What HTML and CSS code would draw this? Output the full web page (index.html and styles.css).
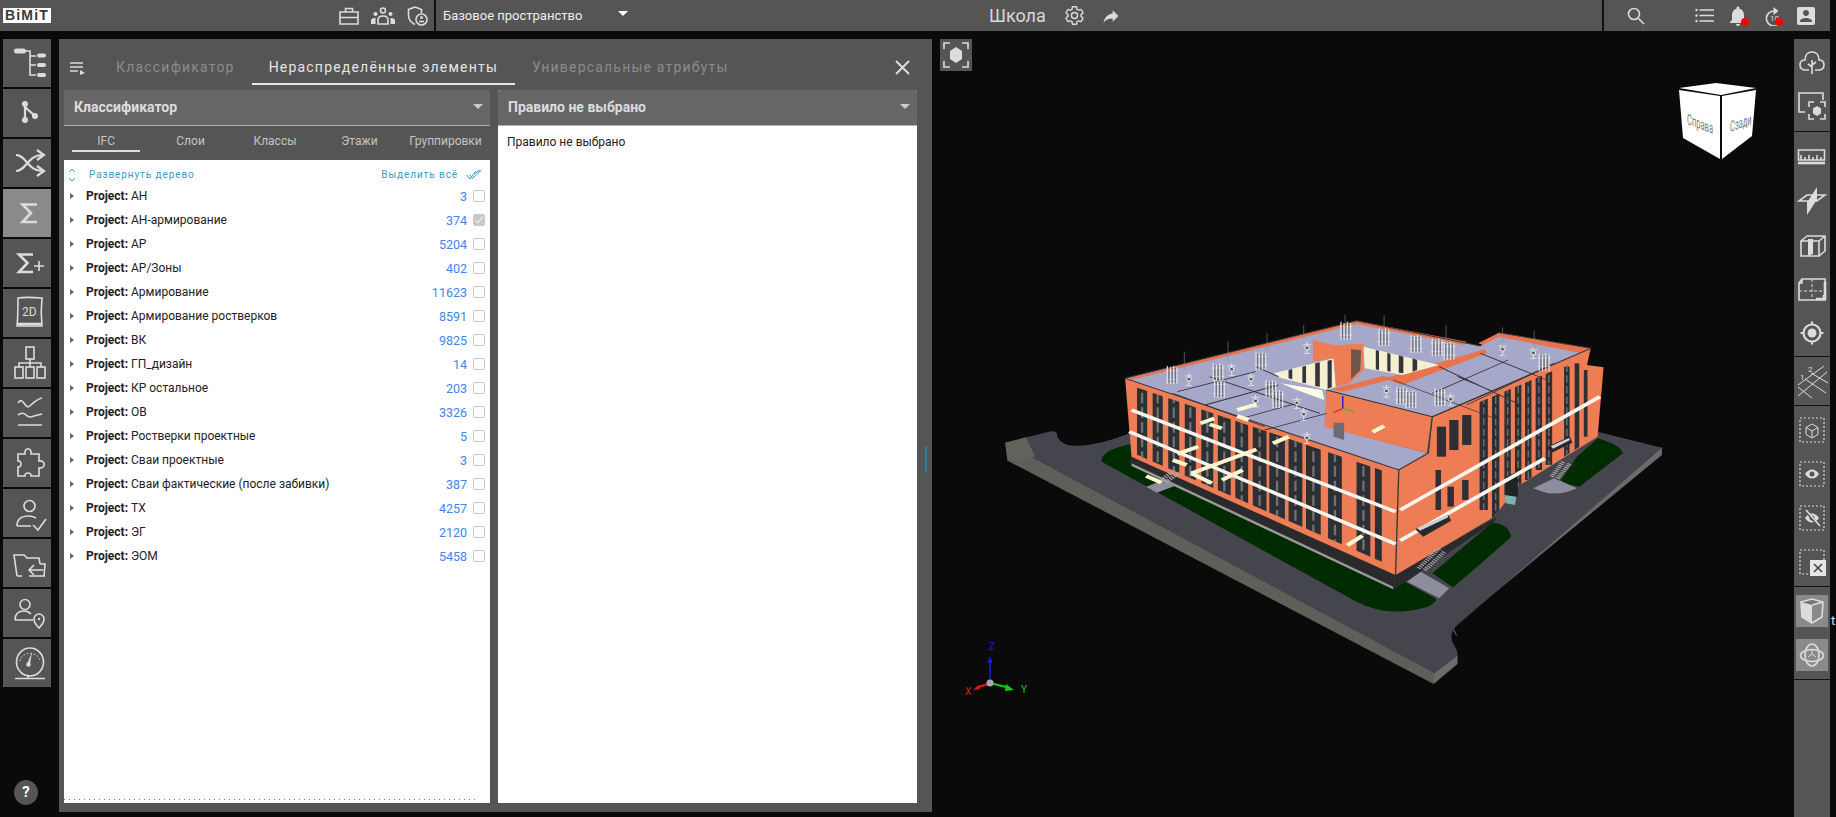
FILE: index.html
```html
<!DOCTYPE html>
<html lang="ru">
<head>
<meta charset="UTF-8">
<title>Школа</title>
<link rel="stylesheet" href="styles.css">
</head>
<body>
<header class="topbar">
  <div class="top-left">
    <div class="logo">BiMiT</div>
    <div class="top-tools">
      <svg class="ico" width="20" height="18" viewBox="0 0 20 18"><path d="M1 5h18v12H1zM6.500 5V1.500h7V5M1 10.500h18M8 10.500h4"/></svg>
      <svg class="ico" width="24" height="18" viewBox="0 0 24 18"><circle cx="12" cy="3.500" r="2.500"/><path d="M7 17v-4c0-3 2-4 5-4s5 1 5 4v4z"/><circle class="solid" cx="4.500" cy="7" r="2"/><circle class="solid" cx="19.500" cy="7" r="2"/><path class="solid" d="M0 17v-3c0-2 1-3 4.500-3v6zM24 17v-3c0-2-1-3-4.500-3v6z"/></svg>
      <svg class="ico" width="21" height="20" viewBox="0 0 21 20"><path d="M8 1 1.500 3.500v6c0 4 2.500 7 6.500 9M8 1l6.500 2.500V7"/><circle cx="14.500" cy="13.500" r="5.500"/><circle class="solid" cx="14.500" cy="11.500" r="1.500"/><path d="M12 15.500h5"/></svg>
    </div>
  </div>
  <div class="workspace">
    <span>Базовое пространство</span>
    <i class="caret caret-light"></i>
  </div>
  <div class="title">
    <span>Школа</span>
    <svg class="ico" width="21" height="21" viewBox="0 0 24 24"><path d="M19.430 12.980c.040-.320.070-.640.070-.980 0-.340-.030-.660-.070-.980l2.110-1.650c.190-.150.240-.420.120-.640l-2-3.460c-.120-.220-.390-.300-.610-.220l-2.490 1c-.520-.400-1.080-.730-1.690-.980l-.380-2.650C14.460 2.180 14.250 2 14 2h-4c-.250 0-.460.180-.490.420l-.380 2.650c-.610.250-1.170.590-1.690.980l-2.490-1c-.230-.090-.490 0-.610.220l-2 3.460c-.130.220-.070.490.120.640l2.110 1.650c-.040.320-.070.650-.070.980 0 .330.030.660.070.980l-2.110 1.650c-.190.150-.240.420-.120.640l2 3.460c.120.220.390.300.610.220l2.490-1c.520.400 1.080.730 1.690.980l.380 2.650c.030.240.240.420.490.420h4c.250 0 .460-.180.490-.420l.380-2.650c.610-.250 1.170-.590 1.690-.980l2.490 1c.230.090.490 0 .610-.220l2-3.460c.120-.220.070-.490-.120-.640l-2.110-1.650zM12 15.500c-1.930 0-3.500-1.570-3.500-3.500s1.570-3.500 3.500-3.500 3.500 1.570 3.500 3.500-1.570 3.500-3.500 3.500z"/></svg>
    <svg class="ico-fill share" width="20" height="20" viewBox="0 0 24 24"><path d="M14 9V5l7 7-7 7v-4.100c-5 0-8.500 1.600-11 5.100 1-5 4-10 11-11z"/></svg>
  </div>
  <div class="top-right">
    <svg class="ico search" width="18" height="18" viewBox="0 0 18 18"><circle cx="7" cy="7" r="5.500"/><path d="m11 11 6 6"/></svg>
    <svg class="ico list" width="19" height="15" viewBox="0 0 19 15"><path d="M4.500 2H19M4.500 7.500H19M4.500 13H19"/><circle class="solid" cx="1.500" cy="2" r="1.200"/><circle class="solid" cx="1.500" cy="7.500" r="1.200"/><circle class="solid" cx="1.500" cy="13" r="1.200"/></svg>
    <div class="notif bell">
      <svg class="ico-fill" width="20" height="22" viewBox="2 1 20 22"><path d="M12 22c1.100 0 2-.900 2-2h-4c0 1.100.900 2 2 2zm6-6v-5c0-3.070-1.630-5.640-4.500-6.320V4c0-.830-.670-1.500-1.500-1.500s-1.500.670-1.500 1.500v.680C7.640 5.360 6 7.920 6 11v5l-2 2v1h16v-1l-2-2z"/></svg>
      <b class="dot"></b>
    </div>
    <div class="notif history">
      <svg class="ico" width="18" height="20" viewBox="0 0 18 20"><path d="M10 5a7.500 7.500 0 1 0 7 10"/><path class="solid" d="M9.500 1v8l5-4z"/><text x="6" y="15" class="mini">10</text></svg>
      <b class="dot"></b>
    </div>
    <svg class="ico-fill account" width="20" height="20" viewBox="2 2 20 20"><path d="M3 5v14c0 1.100.900 2 2 2h14c1.100 0 2-.900 2-2V5c0-1.100-.900-2-2-2H5c-1.100 0-2 .900-2 2zm12 4c0 1.660-1.340 3-3 3s-3-1.340-3-3 1.340-3 3-3 3 1.340 3 3zm-9 8c0-2 4-3.100 6-3.100s6 1.100 6 3.100v1H6v-1z"/></svg>
  </div>
</header>

<main class="workarea">
  <nav class="rail">
    <a class="rail-btn"><svg class="ico" viewBox="0 0 48 48"><path d="M20 12h7v24h6M27 17h6M27 26h6"/><rect class="solid" x="11" y="9.500" width="12" height="5" rx="2.500"/><rect class="solid" x="34" y="14.500" width="9" height="4" rx="2"/><rect class="solid" x="34" y="24" width="9" height="4" rx="2"/><rect class="solid" x="34" y="34" width="9" height="4" rx="2"/></svg></a>
    <a class="rail-btn"><svg class="ico thick" viewBox="0 0 48 48"><path d="M22 15v16M22 18l10 9"/><circle class="solid" cx="22" cy="15" r="3"/><circle class="solid" cx="22" cy="31" r="3"/><circle class="solid" cx="32" cy="27" r="3"/></svg></a>
    <a class="rail-btn"><svg class="ico thick" viewBox="0 0 48 48"><path d="M13 16c10 0 12 16 26 16M13 32c10 0 12-16 26-16M34 11l7 5-7 5M34 27l7 5-7 5"/></svg></a>
    <a class="rail-btn active"><svg class="ico sigma" viewBox="0 0 48 48"><path d="M34 15.500H19.500L28 24l-8.500 9H34"/></svg></a>
    <a class="rail-btn"><svg class="ico sigma" viewBox="0 0 48 48"><path d="M30 15.500H16L24.500 24 16 33h14"/><path class="plus" d="M31 27h10M36 22v10"/></svg></a>
    <a class="rail-btn"><svg class="ico" viewBox="0 0 48 48"><path d="M15 9c6-1 12-1 24 0-1 9-1 19 0 28H14c1-9 1-19 1-28z"/><path class="thick-line" d="M15 35h23"/><text x="19" y="27" class="label-2d">2D</text></svg></a>
    <a class="rail-btn"><svg class="ico" viewBox="0 0 48 48"><rect x="23" y="8" width="8" height="12"/><rect x="12" y="28" width="8" height="11"/><rect x="23" y="28" width="8" height="11"/><rect x="34" y="28" width="8" height="11"/><path d="M27 20v8M16 28v-4h22v4"/></svg></a>
    <a class="rail-btn"><svg class="ico" viewBox="0 0 48 48"><path d="M15 14c2-3 3-3 5-1s3 5 5 5 6-7 14-9M15 26c4-3 6-2 8 0s4 3 8 1l8-2M15 36h24"/></svg></a>
    <a class="rail-btn"><svg class="ico" viewBox="0 0 48 48"><path d="M22 15c-1-7 7-7 6 0h8v7c7-1 7 8 0 7v8h-8c1-4-7-4-6 0h-7v-9c4 1 4-7 0-6v-7z"/></svg></a>
    <a class="rail-btn"><svg class="ico" viewBox="0 0 48 48"><circle cx="26.500" cy="17" r="5.500"/><path d="M14 37c0-7 5-10 12-10 3 0 5 1 7 2M14 37h14M30 36l5 5 8-11"/></svg></a>
    <a class="rail-btn"><svg class="ico" viewBox="0 0 48 48"><path d="M14 37 11 16h10l3 3h12l1 6M19 37h-5M42 37H26M37 25h5l-1 12"/><path d="M26 31h14M31 26l-5 5 5 5"/></svg></a>
    <a class="rail-btn"><svg class="ico" viewBox="0 0 48 48"><circle cx="22" cy="15.500" r="5"/><path d="M12 31c0-6 3-9 9-9 3 0 5 1 7 3M12 31h18"/><path d="M36 39c-3-3-5-6-5-9a5 5 0 0 1 10 0c0 3-2 6-5 9z"/><circle class="solid" cx="36" cy="30" r="1.200"/></svg></a>
    <a class="rail-btn"><svg class="ico" viewBox="0 0 48 48"><ellipse cx="27" cy="23" rx="13.500" ry="14"/><path class="thin" d="M17 22c1-10 19-10 20 0" stroke-dasharray="1.500 2"/><path class="solid" d="m29 13-2 12h-3z"/><circle class="solid" cx="25.500" cy="25.500" r="2.200"/><path d="M25 37v2M12 39.500h30"/></svg></a>
    <div class="help">?</div>
  </nav>

  <section class="panel">
    <div class="panel-head">
      <svg class="ico menu" width="15" height="14" viewBox="0 0 15 14"><path d="M0 2h13M0 6h13M0 10h8"/><path class="solid" d="m10 9 5 3-5 2z"/></svg>
      <div class="tabs">
        <div class="tab">Классификатор</div>
        <div class="tab current">Нераспределённые элементы</div>
        <div class="tab">Универсальные атрибуты</div>
      </div>
      <svg class="ico close" width="15" height="15" viewBox="0 0 15 15"><path d="m1 1 13 13M14 1 1 14"/></svg>
    </div>
    <div class="panel-body">
      <div class="card card-left">
        <div class="card-head"><span>Классификатор</span><i class="caret"></i></div>
        <div class="subtabs">
          <div class="subtab current">IFC</div>
          <div class="subtab">Слои</div>
          <div class="subtab">Классы</div>
          <div class="subtab">Этажи</div>
          <div class="subtab">Группировки</div>
        </div>
        <div class="tree">
          <div class="tree-tools">
            <svg class="teal-ico" width="8" height="14" viewBox="0 0 8 14"><path d="m1 4 3-3 3 3M1 10l3 3 3-3"/></svg>
            <span class="expand">Развернуть дерево</span>
            <span class="select-all">Выделить всё</span>
            <svg class="teal-ico" width="16" height="11" viewBox="0 0 16 11"><path d="m.5 6 3.500 4 6-8M4 6l2.500 3.500L15.500 1M8 5l6-4"/></svg>
          </div>
          <div class="row"><i class="arrow"></i><span class="name"><b>Project:</b> АН</span><span class="count">3</span><i class="check"></i></div>
          <div class="row"><i class="arrow"></i><span class="name"><b>Project:</b> АН-армирование</span><span class="count">374</span><i class="check checked"></i></div>
          <div class="row"><i class="arrow"></i><span class="name"><b>Project:</b> АР</span><span class="count">5204</span><i class="check"></i></div>
          <div class="row"><i class="arrow"></i><span class="name"><b>Project:</b> АР/Зоны</span><span class="count">402</span><i class="check"></i></div>
          <div class="row"><i class="arrow"></i><span class="name"><b>Project:</b> Армирование</span><span class="count">11623</span><i class="check"></i></div>
          <div class="row"><i class="arrow"></i><span class="name"><b>Project:</b> Армирование ростверков</span><span class="count">8591</span><i class="check"></i></div>
          <div class="row"><i class="arrow"></i><span class="name"><b>Project:</b> ВК</span><span class="count">9825</span><i class="check"></i></div>
          <div class="row"><i class="arrow"></i><span class="name"><b>Project:</b> ГП_дизайн</span><span class="count">14</span><i class="check"></i></div>
          <div class="row"><i class="arrow"></i><span class="name"><b>Project:</b> КР остальное</span><span class="count">203</span><i class="check"></i></div>
          <div class="row"><i class="arrow"></i><span class="name"><b>Project:</b> ОВ</span><span class="count">3326</span><i class="check"></i></div>
          <div class="row"><i class="arrow"></i><span class="name"><b>Project:</b> Ростверки проектные</span><span class="count">5</span><i class="check"></i></div>
          <div class="row"><i class="arrow"></i><span class="name"><b>Project:</b> Сваи проектные</span><span class="count">3</span><i class="check"></i></div>
          <div class="row"><i class="arrow"></i><span class="name"><b>Project:</b> Сваи фактические (после забивки)</span><span class="count">387</span><i class="check"></i></div>
          <div class="row"><i class="arrow"></i><span class="name"><b>Project:</b> ТХ</span><span class="count">4257</span><i class="check"></i></div>
          <div class="row"><i class="arrow"></i><span class="name"><b>Project:</b> ЭГ</span><span class="count">2120</span><i class="check"></i></div>
          <div class="row"><i class="arrow"></i><span class="name"><b>Project:</b> ЭОМ</span><span class="count">5458</span><i class="check"></i></div>
          <div class="tree-end"></div>
        </div>
      </div>
      <div class="card card-right">
        <div class="card-head"><span>Правило не выбрано</span><i class="caret"></i></div>
        <div class="rule-body">Правило не выбрано</div>
      </div>
    </div>
    <div class="resize-handle"></div>
  </section>

  <section class="viewport">
    <div class="fit-btn">
      <svg class="ico" width="26" height="26" viewBox="0 0 26 26"><path d="M1 7V1h6M19 1h6v6M25 19v6h-6M7 25H1v-6"/><path class="solid" d="m13 5 6 4v8l-6 4-6-4V9z"/></svg>
    </div>

    <!-- coordinates read off the 3x crop, so the viewBox is stretched -->
    <svg class="model" viewBox="0 0 1568 1290" preserveAspectRatio="none">
      <defs>
        <clipPath id="wall-l"><path d="M325 285 905 555 900 830 335 490z"/></clipPath>
        <clipPath id="wall-r"><path d="M918 550 978 500 985 395 1090 335 1330 195 1322 230 1355 240 1340 440 1170 590 1120 680 910 845z"/></clipPath>
        <g id="unit" class="unit">
          <path d="M3 0v54M10 4v50M17 0v54M24 4v50M0 14h27M0 40h27"/>
          <path class="unit-dark" d="M6.500 6v44M13.500 6v44M20.500 6v44"/>
        </g>
        <g id="pipe" class="unit">
          <path d="M0 0v36M-9 8h18M-7 36h14"/>
          <circle cx="0" cy="18" r="5" fill="#555"/>
        </g>
      </defs>

      <!-- site -->
      <path fill="#5f5f5a" d="M55 458 60 512 988 1182 992 1148z"/>
      <path fill="#6b6b6b" d="M988 1182 1040 1122 1040 1095 990 1148zM1040 1040C1025 1020 1030 1005 1040 1000L1485 495 1485 472 1030 1010z"/>
      <path fill="#45454d" d="M55 458 150 425Q170 420 168 440 180 470 215 467 265 465 325 430L1345 425 1485 473 1040 1005Q1020 1030 1030 1060 1040 1080 1040 1095L990 1150z"/>
      <path fill="#63635e" d="M55 458 100 442 120 500 60 512z"/>
      <path fill="#002a00" d="M330 462Q262 480 265 515L820 935Q890 985 975 950 1005 930 985 920L925 875 895 892 335 515z"/>
      <path fill="#002a00" d="M985 850 1115 698Q1150 700 1157 740 1100 810 1030 892z"/>
      <path fill="#002a00" d="M1345 445Q1395 465 1400 490L1305 590Q1280 585 1265 570L1300 500z"/>
      <path fill="#8d8d9e" d="M362 590 400 570 440 580 385 608zM930 875 960 845 1022 895 1000 925zM1205 595 1250 565 1300 595Q1260 620 1225 605z"/>

      <!-- lower plinth and facades -->
      <path fill="#2a2a2c" d="M330 498 905 855 900 900 325 520z"/>
      <path fill="#9a9a9a" d="M330 520 900 890 900 898 330 528z"/>
      <path fill="#2a2a2c" d="M905 855 1125 680 1120 695 900 900z"/>
      <path fill="#ee7d55" d="M316 265 912 540 905 855 330 500z"/>
      <g clip-path="url(#wall-l)" fill="#2d2f33">
        <rect x="342" width="22" height="1290"/><rect x="376" width="22" height="1290"/>
        <rect x="410" width="24" height="1290"/><rect x="446" width="24" height="1290"/>
        <rect x="482" width="26" height="1290"/><rect x="518" width="28" height="1290"/>
        <rect x="556" width="28" height="1290"/><rect x="594" width="30" height="1290"/>
        <rect x="630" width="34" height="1290"/><rect x="672" width="30" height="1290"/>
        <rect x="710" width="32" height="1290"/><rect x="758" width="30" height="1290"/>
        <rect x="820" width="30" height="1290"/><rect x="860" width="15" height="1290"/>
      </g>
      <g clip-path="url(#wall-l)" class="panes">
        <path d="M353 0V1290M387 0V1290M422 0V1290M458 0V1290M495 0V1290M532 0V1290M570 0V1290M609 0V1290M647 0V1290M687 0V1290M726 0V1290M773 0V1290M835 0V1290"/>
      </g>
      <path fill="#ee7d55" d="M912 540 978 490 985 382 1090 320 1330 175 1322 225 1358 232 1345 440 1170 590 1120 680 905 855z"/>
      <g clip-path="url(#wall-r)" fill="#2d2f33">
        <rect x="995" y="410" width="20" height="90"/><rect x="1022" y="390" width="20" height="90"/>
        <rect x="1050" y="375" width="20" height="90"/>
        <rect x="992" y="540" width="12" height="120"/><rect x="1018" y="590" width="14" height="60"/><rect x="1050" y="570" width="14" height="60"/>
        <rect x="1088" y="320" width="18" height="340"/>
        <rect x="1115" y="300" width="16" height="390"/><rect x="1142" y="280" width="14" height="340"/>
        <rect x="1165" y="265" width="14" height="330"/><rect x="1187" y="250" width="14" height="320"/>
        <rect x="1210" y="240" width="14" height="300"/><rect x="1232" y="225" width="14" height="300"/>
        <rect x="1272" y="230" width="12" height="280"/><rect x="1295" y="220" width="10" height="260"/>
        <rect x="1315" y="240" width="8" height="200"/>
      </g>
      <g clip-path="url(#wall-r)" class="panes panes-r">
        <path d="M1097 0V660M1123 0V690M1149 0V620M1172 0V595M1194 0V570M1217 0V540M1239 0V525M1278 0V510"/>
      </g>
      <path fill="#202226" d="M1145 560 1170 545 1172 620 1145 620z"/>
      <path fill="#7fb4ae" d="M1142 615 1168 620 1165 645 1145 640z"/>

      <!-- roofs -->
      <path fill="#a6a8c9" d="M316 265 820 92 1090 168 1130 128 1330 175 985 380 755 300 755 410 975 490 912 540z"/>
      <path fill="#e9734c" d="M325 265 820 92 1060 155 1055 165 820 102 330 270z"/>
      <path fill="#e9734c" d="M1130 128 1330 175 1305 188 1130 140 1095 165 1085 160z"/>
      <path fill="#e9734c" d="M765 298 878 258 890 262 1100 178 1103 190 920 285 890 270 790 305z"/>
      <path fill="#ee7d55" d="M755 300 985 380 975 490 750 410z"/>
      <path fill="#f5f0d0" d="M640 250 770 205 775 290 755 300 650 262z"/>
      <path fill="#33353a" d="M672 240 680 237 680 268 672 265zM702 230 710 227 710 280 702 278zM730 220 740 217 740 290 730 288zM757 212 766 209 766 292 757 296z"/>
      <path fill="#f5f0d0" d="M835 170 1000 225 920 255 838 235z"/>
      <path fill="#33353a" d="M862 180 869 183 869 240 862 238zM887 188 894 192 894 245 887 243zM912 196 922 200 922 250 912 248zM942 205 952 210 952 240 942 245z"/>
      <path fill="#fffbe6" d="M655 280 745 300 750 330 690 300z"/>
      <path fill="#ee7d55" d="M725 150 770 165 835 160 835 240 805 280 775 290 770 205 725 215z"/>
      <path fill="#a6a8c9" d="M730 148 780 140 832 158 785 166z"/>
      <path fill="#6e5648" d="M808 178 830 180 828 240 808 268z"/>
      <path fill="#6b6b74" d="M770 398 793 398 793 450 770 440z"/>

      <!-- roof grid and edges -->
      <path class="edge" d="M316 265 912 540 975 490M912 540 905 855M755 300 985 380 1330 175M985 380 975 490M820 92 316 265M820 92 1090 168M1130 128 1330 175"/>
      <path class="grid" d="M430 305 600 245M490 345 650 285M570 385 690 340M620 420 755 370M420 310 620 410M500 260 740 370M600 230 650 260M900 270 1130 390M1000 230 1170 340M1090 190 1235 270M985 310 1150 210M1060 345 1250 220M1110 300 1040 260"/>

      <!-- equipment on the roof -->
      <use href="#unit" x="405" y="228"/><use href="#unit" x="505" y="220"/><use href="#unit" x="508" y="270"/>
      <use href="#unit" x="598" y="185"/><use href="#unit" x="620" y="270"/><use href="#unit" x="635" y="300"/>
      <use href="#unit" x="783" y="95"/><use href="#unit" x="866" y="115"/><use href="#unit" x="936" y="135"/>
      <use href="#unit" x="982" y="145"/><use href="#unit" x="1008" y="155"/><use href="#unit" x="1215" y="190"/>
      <use href="#unit" x="905" y="290"/><use href="#unit" x="925" y="300"/><use href="#unit" x="988" y="295"/>
      <use href="#pipe" x="455" y="250"/><use href="#pipe" x="548" y="220"/><use href="#pipe" x="590" y="250"/>
      <use href="#pipe" x="600" y="315"/><use href="#pipe" x="690" y="320"/><use href="#pipe" x="705" y="355"/>
      <use href="#pipe" x="712" y="155"/><use href="#pipe" x="1138" y="160"/><use href="#pipe" x="1205" y="170"/>
      <use href="#pipe" x="885" y="285"/><use href="#pipe" x="1025" y="310"/><use href="#pipe" x="712" y="425"/>
      <path class="mast" d="M445 185V240M540 155V215M625 130V180M705 105V150M795 75V110M880 75V120M1015 105V150M1138 112V180M1207 122V180"/>

      <!-- white floor bands -->
      <path class="band" d="M330 360 905 665M325 425 905 762M915 660 1350 320M915 752 1230 505"/>
      <path fill="#26282b" d="M948 718 1020 675 1026 692 965 740z"/>
      <path fill="#cfd0d8" d="M952 714 1018 676 1020 682 958 722z"/>
      <path fill="#26282b" d="M1238 468 1285 440 1290 458 1245 488z"/>
      <path fill="#cfd0d8" d="M1243 468 1283 444 1285 450 1248 476z"/>

      <!-- stairs -->
      <path class="stairs" d="M395 570 425 540M405 575 435 548M955 835 1000 775M968 840 1012 785M1245 560 1270 515M1258 565 1285 520"/>

      <!-- beams -->
      <path class="beam" d="M560 360 602 343M480 400 510 385M500 403 527 415M560 378 585 390M855 426 880 408M638 460 672 440M430 492 475 470M420 510 450 525M460 550 602 478M460 550 505 580M527 570 572 540M362 558 395 578M800 766 833 737"/>

      <!-- origin marker -->
      <path class="axis" stroke="#1a1ad8" d="M790 355V318"/>
      <path class="axis" stroke="#d81a1a" d="M790 355 770 368"/>
      <path class="axis" stroke="#1ac81a" d="M790 355 814 366"/>
    </svg>

    <svg class="cube" viewBox="1675 80 90 84">
      <path fill="#fff" d="M1680 88 1717 83 1757 88 1722 95z"/>
      <path fill="#fff" d="M1680 90 1721 96 1721 159 1684 138z"/>
      <path fill="#fff" d="M1723 96 1757 90 1753 136 1723 159z"/>
      <text class="face" transform="matrix(.58 .22 0 1.150 1688 124)">Справа</text>
      <text class="face" transform="matrix(.58 -.21 0 1.150 1731 132)">Сзади</text>
    </svg>

    <svg class="gizmo" viewBox="960 640 70 60">
      <path stroke="#1a1ae0" stroke-width="1.500" d="M990 683V662"/>
      <path fill="#1a1ae0" d="m990 656 2.500 7h-5z"/>
      <path stroke="#d81a1a" stroke-width="2" d="m990 683-14 5"/>
      <path fill="#d81a1a" d="m973 690 6-5 1 4z"/>
      <path stroke="#18c818" stroke-width="2" d="m990 683 16 4"/>
      <path fill="#18c818" d="m1014 690-9 1 1-7z"/>
      <circle cx="990" cy="683" r="3.500" fill="#aaa"/>
      <text x="989" y="650" class="gz gz-z">Z</text>
      <text x="965" y="695" class="gz gz-x">X</text>
      <text x="1021" y="693" class="gz gz-y">Y</text>
    </svg>
  </section>

  <aside class="tools">
    <div class="tool-group g1">
      <div class="tool"><svg class="ico" viewBox="0 0 36 44"><path d="M12 30c-4 0-6-2-6-5s2-5 5-5c0-5 3-8 7-8s7 3 7 8c3 0 5 2 5 5s-2 5-6 5h-3M18 34V20M18 27l-4-3M18 25l4-3M12 30h3"/></svg></div>
      <div class="tool"><svg class="ico" viewBox="0 0 36 44"><path d="M11 28H5V9h24v7M20 18h-5v5M26 18h5v5M31 30v5h-5M20 35h-5v-5"/><path class="solid" d="m23 22 4 2.500v5L23 32l-4-2.500v-5z"/></svg></div>
    </div>
    <div class="tool-group g2">
      <div class="tool"><svg class="ico" viewBox="0 0 36 44"><path d="M4.500 15h26v10h-26zM7 20v5M11 22v3M15 20v5M19 22v3M23 20v5M27 22v3"/><path class="thick-line" d="M4 28h27"/></svg></div>
      <div class="tool"><svg class="ico" viewBox="0 0 36 44"><path d="M5 22 13 16h18l-8 6z"/><path class="solid" d="M23 8v14h-9zM13 22h9l-9 14z"/></svg></div>
      <div class="tool"><svg class="ico" viewBox="0 0 36 44"><path d="M7 18h18v15H7zM7 18l6-5h18v15l-6 5M25 18l6-5"/><path class="solid" d="M14 16h5v15l-5 2z"/></svg></div>
      <div class="tool"><svg class="ico" viewBox="0 0 36 44"><path d="M5 16l3-4h23v21H5zM5 16h3v-4"/><path class="thin" stroke-dasharray="3 2" d="M5 24h26M18 12v21"/><path class="thick-line" d="M22 32h8v-4M31 15v18"/></svg></div>
      <div class="tool"><svg class="ico thick" viewBox="0 0 36 44"><circle cx="18" cy="22" r="8.500"/><circle class="solid" cx="18" cy="22" r="4.500"/><path d="M18 10.500V13M18 31v2.500M6.500 22H9M27 22h2.500"/></svg></div>
    </div>
    <div class="tool-group g3">
      <div class="tool"><svg class="ico thin" viewBox="0 0 36 44"><path d="M4 36 33 12M4 27l14 11M11 19l21 14M17 13l17 10M4 25l26-19"/><text x="6" y="20" class="mini">1</text><text x="14" y="12" class="mini">2</text></svg></div>
    </div>
    <div class="tool-group g4">
      <div class="tool"><svg class="ico" viewBox="0 0 36 44"><rect class="dash" x="6" y="10" width="24" height="24"/><path class="thin" d="m18 16 6 3.500v7L18 30l-6-3.500v-7zM12 19.500l6 3.500 6-3.500M18 23v7"/></svg></div>
      <div class="tool"><svg class="ico" viewBox="0 0 36 44"><rect class="dash" x="6" y="10" width="24" height="24"/><path class="solid" d="M11 22c4-6 10-6 14 0-4 6-10 6-14 0z"/><circle cx="18" cy="22" r="2.500" fill="#555" stroke="none"/></svg></div>
      <div class="tool"><svg class="ico" viewBox="0 0 36 44"><rect class="dash" x="6" y="10" width="24" height="24"/><path class="solid" d="M11 22c4-6 10-6 14 0-4 6-10 6-14 0z"/><circle cx="18" cy="22" r="2.500" fill="#555" stroke="none"/><path d="m11 14 14 16" stroke="#555" stroke-width="3"/><path d="m12 14 14 16"/></svg></div>
      <div class="tool"><svg class="ico" viewBox="0 0 36 44"><rect class="dash" x="6" y="10" width="24" height="24"/><rect x="16" y="20" width="16" height="16" fill="#e6e6e6" stroke="none"/><path d="m20 24 8 8M28 24l-8 8" stroke="#444"/></svg></div>
    </div>
    <div class="tool-group g5">
      <div class="tool"><div class="toggle"><svg class="ico" viewBox="0 0 32 32"><path fill="#777" stroke="none" d="M5 7l11-3 11 3-11 3z"/><path class="solid" d="M5 7l11 3v18L6 22z"/><path d="M5 7 16 4l11 3-1 15-10 6L6 22zM16 10l11-3"/></svg></div></div>
      <div class="tool"><div class="toggle"><svg class="ico" viewBox="0 0 32 32"><ellipse cx="16" cy="16.500" rx="11.500" ry="6"/><ellipse cx="16" cy="16" rx="7" ry="11"/><path class="thin" d="M16 15v-4M16 15l-4 3M16 15l4 3"/></svg></div></div>
    </div>
  </aside>
  <div class="edge-strip"><span>t</span></div>
</main>
</body>
</html>
```

FILE: styles.css
```css
* { box-sizing: border-box; }
html, body { height: 100%; }
body {
  margin: 0;
  width: 1836px;
  height: 817px;
  overflow: hidden;
  background-color: #0a0a0a;
  font-family: Roboto, "Noto Sans", sans-serif;
  color: #222;
}
svg { display: block; }

/* shared icon styles */
.ico { fill: none; stroke: #dcdcdc; stroke-width: 1.6; }
.ico .solid { fill: #dcdcdc; stroke: none; }
.ico-fill { fill: #dcdcdc; }
.ico.thick { stroke-width: 2.2; }
.ico.thin, .ico .thin { stroke-width: 1; }
.ico .thick-line { stroke-width: 2.6; }
.ico .dash { stroke-dasharray: 2 2; stroke-width: 1.2; }
.ico .mini { font-size: 8px; fill: #dcdcdc; stroke: none; font-family: Roboto, sans-serif; }
.caret {
  width: 0;
  height: 0;
  border-left: 5px solid transparent;
  border-right: 5px solid transparent;
  border-top: 5px solid #ccc;
}
.caret-light { border-top-color: #fff; }

/* top bar */
.topbar {
  display: flex;
  width: 1830px;
  height: 31px;
  background-color: #555;
  color: #eee;
}
.top-left {
  display: flex;
  align-items: center;
  width: 434px;
  padding-left: 3px;
}
.logo {
  width: 48px;
  height: 15px;
  background-color: #fff;
  color: #3a3a3a;
  font-family: "Liberation Sans", sans-serif;
  font-size: 14px;
  line-height: 15px;
  font-weight: bold;
  text-align: center;
  letter-spacing: 1.2px;
}
.top-tools {
  display: flex;
  align-items: center;
  gap: 12px;
  margin-left: auto;
  padding-right: 6px;
}
.workspace {
  display: flex;
  align-items: center;
  width: 555px;
  padding-left: 7px;
  border-left: 2px solid #111;
  font-size: 13px;
}
.workspace .caret { margin-left: 36px; margin-top: -4px; }
.title {
  display: flex;
  align-items: center;
  flex: 1;
  font-size: 18px;
  color: #d8d8d8;
}
.title svg:first-of-type { margin-left: 18px; }
.share { margin-left: 16px; }
.top-right {
  position: relative;
  display: flex;
  align-items: center;
  width: 228px;
  border-left: 2px solid #111;
}
.search { margin-left: 23px; }
.list { margin-left: 50px; }
.notif { position: relative; }
.bell { margin-left: 14px; }
.history { margin-left: 16px; }
.account { margin-left: 14px; }
.dot {
  position: absolute;
  right: -1px;
  bottom: 1px;
  width: 8px;
  height: 8px;
  border-radius: 50%;
  background-color: #f00;
}
.history .dot { right: -1px; bottom: 0; }

/* main row */
.workarea {
  display: flex;
  height: 786px;
}

/* left rail */
.rail {
  position: relative;
  display: flex;
  flex-direction: column;
  gap: 2px;
  width: 51px;
  padding: 8px 0 0 3px;
  flex-shrink: 0;
}
.rail-btn {
  display: block;
  width: 48px;
  height: 48px;
  background-color: #555;
}
.rail-btn.active { background-color: #8a8a8a; }
.sigma { stroke-width: 2.6; }
.sigma .plus { stroke-width: 1.6; }
.label-2d { font-size: 12px; fill: #dcdcdc; stroke: none; font-family: Roboto, sans-serif; }
.help {
  position: absolute;
  left: 14px;
  top: 749px;
  width: 24px;
  height: 25px;
  border-radius: 50%;
  background-color: #555;
  color: #fff;
  font-size: 15px;
  font-weight: bold;
  line-height: 25px;
  text-align: center;
}

/* panel */
.panel {
  position: relative;
  display: flex;
  flex-direction: column;
  flex-shrink: 0;
  width: 873px;
  height: 773px;
  margin: 8px 0 0 8px;
  background-color: #555;
}
.panel-head {
  display: flex;
  align-items: center;
  height: 51px;
  flex-shrink: 0;
}
.menu { margin: 6px 0 0 11px; }
.tabs {
  display: flex;
  height: 46px;
  margin: 0 0 5px 14px;
}
.tab {
  padding: 11px 17px 0;
  color: #8c8c8c;
  font-size: 14px;
  line-height: 35px;
  letter-spacing: 1.2px;
  white-space: nowrap;
}
.tab.current {
  color: #e6e6e6;
  border-bottom: 2px solid #e6e6e6;
}
.close { margin: 6px 22px 0 auto; stroke-width: 2; }
.panel-body {
  display: flex;
  flex: 1;
  gap: 8px;
  padding: 0 15px 9px 5px;
  min-height: 0;
}
.card {
  display: flex;
  flex-direction: column;
  border-radius: 3px 3px 0 0;
  overflow: hidden;
}
.card-left { width: 426px; }
.card-right { width: 419px; background-color: #fff; }
.card-head {
  display: flex;
  align-items: center;
  justify-content: space-between;
  height: 36px;
  padding: 0 7px 2px 10px;
  background-color: #666;
  border-bottom: 1px solid #b0b0b0;
  color: #ddd;
  font-size: 14px;
  font-weight: bold;
  flex-shrink: 0;
}
.subtabs {
  display: grid;
  grid-template-columns: repeat(4, 84.4px) 88px;
  height: 34px;
  padding-top: 1px;
  flex-shrink: 0;
}
.subtab {
  display: flex;
  align-items: center;
  justify-content: center;
  margin: 0 0 8px;
  padding-top: 3px;
  height: 25px;
  color: #c4c4c4;
  font-size: 12px;
}
.subtab.current {
  position: relative;
  color: #c4c4c4;
}
.subtab.current::after {
  content: "";
  position: absolute;
  left: 8px;
  bottom: 0;
  width: 68px;
  height: 2px;
  background-color: #ddd;
}
.tree {
  display: flex;
  flex-direction: column;
  flex: 1;
  background-color: #fff;
  min-height: 0;
}
.tree-tools {
  display: flex;
  align-items: center;
  height: 19px;
  margin-top: 5px;
  padding: 0 8px 0 4px;
  color: #3e9bbd;
  font-size: 10px;
  letter-spacing: .9px;
  flex-shrink: 0;
}
.teal-ico { fill: none; stroke: #3e9bbd; stroke-width: 1; }
.expand { margin-left: 13px; }
.select-all { margin-left: auto; margin-right: 8px; }
.row {
  display: flex;
  align-items: center;
  height: 24px;
  padding: 0 5px 0 6px;
  color: #222;
  font-size: 12px;
  flex-shrink: 0;
}
.row b { font-weight: 700; }
.arrow {
  width: 0;
  height: 0;
  margin-right: 12px;
  border-top: 3px solid transparent;
  border-bottom: 3px solid transparent;
  border-left: 4px solid #666;
}
.count { margin-left: auto; color: #4285f4; font-size: 12.5px; }
.check {
  position: relative;
  width: 12px;
  height: 12px;
  margin-left: 6px;
  border: 1.5px solid #c8c8c8;
  border-radius: 2px;
}
.check.checked { background-color: #c8c8c8; }
.check.checked::after {
  content: "";
  position: absolute;
  left: 2.500px;
  top: 0;
  width: 3px;
  height: 7px;
  border: solid #f4f4f4;
  border-width: 0 1.5px 1.5px 0;
  transform: rotate(40deg);
}
.tree-end {
  height: 1px;
  margin: auto 12px 3px 0;
  background: repeating-linear-gradient(90deg, #2a9db5 0 1px, transparent 1px 5px);
  flex-shrink: 0;
}
.rule-body {
  padding: 9px 9px;
  color: #222;
  font-size: 12px;
  line-height: 15px;
}
.resize-handle {
  position: absolute;
  left: 866px;
  top: 407px;
  width: 2px;
  height: 27px;
  background-color: #2f7f99;
}

/* 3d view */
.viewport {
  position: relative;
  flex: 1;
  overflow: hidden;
}
.fit-btn {
  position: absolute;
  left: 8px;
  top: 8px;
  display: flex;
  align-items: center;
  justify-content: center;
  width: 32px;
  height: 32px;
  background-color: #555;
}
.model {
  position: absolute;
  left: 48px;
  top: 259px;
  width: 720px;
  height: 430px;
}
.edge { fill: none; stroke: #3a3a3a; stroke-width: 3; }
.grid { fill: none; stroke: #33333c; stroke-width: 2.5; }
.unit { fill: none; stroke: #e2e2e2; stroke-width: 2.5; }
.unit-dark { stroke: #3a3a3a; stroke-width: 1.5; }
.mast { fill: none; stroke: #888; stroke-width: 1.5; }
.band { fill: none; stroke: #f7f5ee; stroke-width: 10; }
.stairs { fill: none; stroke: #aaa; stroke-width: 10; stroke-dasharray: 3 3; }
.panes { fill: none; stroke: #6e7276; stroke-width: 5; stroke-dasharray: 32 12; }
.panes-r { stroke-width: 3; stroke-dasharray: 22 10; }
.beam { fill: none; stroke: #fdf6d0; stroke-width: 11; }
.axis { fill: none; stroke-width: 3; }
.cube {
  position: absolute;
  left: 742px;
  top: 49px;
  width: 90px;
  height: 84px;
}
.face { font-size: 13px; fill: #808080; font-family: Roboto, sans-serif; }
.gizmo {
  position: absolute;
  left: 28px;
  top: 609px;
  width: 70px;
  height: 60px;
  fill: none;
}
.gz { font-size: 10px; font-family: Roboto, sans-serif; }
.gz-z { fill: #1a1ae0; }
.gz-x { fill: #d81a1a; }
.gz-y { fill: #18c818; }

/* right tool column */
.tools {
  display: flex;
  flex-direction: column;
  width: 36px;
  margin-top: 8px;
  background-color: #555;
  flex-shrink: 0;
}
.tool-group { border-bottom: 1px solid #111; }
.tool-group.g1 { height: 93px; padding-top: 1px; }
.tool-group.g2 { height: 225px; padding-top: 3px; }
.tool-group.g3 { height: 49px; padding-top: 3px; }
.tool-group.g4 { height: 181px; padding-top: 2px; }
.tool-group.g5 { height: 93px; padding-top: 8px; }
.tool {
  display: flex;
  align-items: flex-start;
  justify-content: center;
  height: 44px;
}
.tool > svg { width: 36px; height: 44px; }
.toggle {
  width: 32px;
  height: 32px;
  background-color: #8a8a8a;
}
.edge-strip {
  position: relative;
  width: 6px;
  color: #cfe0ee;
  font-size: 13px;
}
.edge-strip span {
  position: absolute;
  left: 1px;
  top: 582px;
}
```
